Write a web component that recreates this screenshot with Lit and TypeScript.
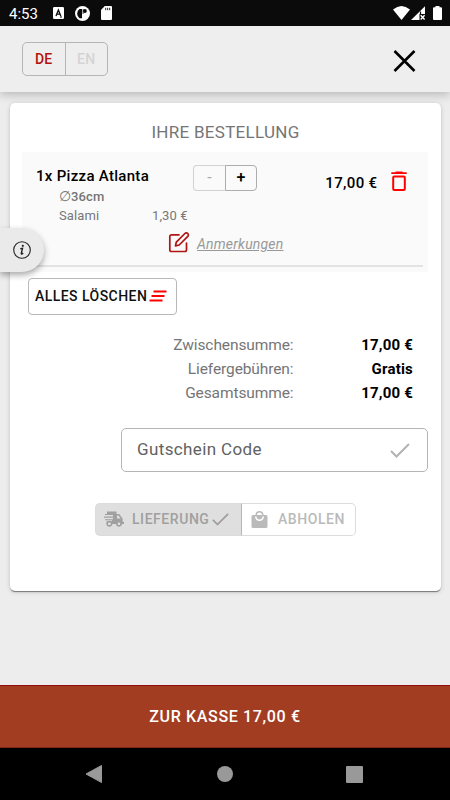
import { LitElement, html, css, svg } from "lit";
import { customElement, property } from "lit/decorators.js";

const totals = [
  ["Zwischensumme:", "17,00 €"],
  ["Liefergebühren:", "Gratis"],
  ["Gesamtsumme:", "17,00 €"],
];

const truck = svg`
  <path fill="currentColor" fill-rule="evenodd" d="M3 .5H12.500V3H15.200L18.600 7.500V10.800L20 11V13H17.900A2.900 2.900 0 0 1 12.200 13H8.300A2.900 2.900 0 0 1 2.600 13V10.300H8V9.300H1V8.200H9V6.700H0V5.600H9V4.100H1V3H3ZM13 4.500V7.500H16.700L14.500 4.500ZM5.400 11.200A1.500 1.500 0 1 0 5.400 14.200A1.500 1.500 0 1 0 5.400 11.200ZM15 11.200A1.500 1.500 0 1 0 15 14.200A1.500 1.500 0 1 0 15 11.200Z"/>
  <path fill="none" stroke="currentColor" stroke-width="1.300" d="M7.700 12.700A2.300 2.300 0 1 1 3.100 12.700A2.300 2.300 0 1 1 7.700 12.700ZM17.300 12.700A2.300 2.300 0 1 1 12.700 12.700A2.300 2.300 0 1 1 17.300 12.700Z"/>`;

@customElement("status-bar")
export class StatusBar extends LitElement {
  static styles = css`
    :host { display: flex; height: 26px; background: #0b0b0b; color: #fff; align-items: center; }
    .time { width: 44px; margin-left: 9px; font: 400 15px/26px Roboto, sans-serif; padding-top: 1px; box-sizing: border-box; height: 26px; }
    svg { display: block; }
    .spacer { flex: 1; }
    .a { margin-right: 11px; }
    .p { margin-right: 11px; }
    .wifi { margin-right: 1px; }
    .signal { margin-right: 7px; }
    .battery { margin-right: 8px; }
  `;
  render() {
    return html`
      <div class="time">4:53</div>
      <svg class="a" width="11" height="12" viewBox="0 0 11 12"><rect width="11" height="12" rx="1.3" fill="#fff"/><path d="M3 9 5.4 3 7.8 9M3.8 7.2H7" fill="none" stroke="#0b0b0b" stroke-width="1.3"/><path d="M7 10h2" stroke="#0b0b0b"/></svg>
      <svg class="p" width="15" height="15" viewBox="0 0 15 15"><circle cx="7.5" cy="7.5" r="7.5" fill="#fff"/><path d="M4.500 3H7V12.300H4.500A5.800 5.800 0 0 1 4.500 3Z" fill="#0b0b0b"/><circle cx="9.900" cy="5" r="1.900" fill="#0b0b0b"/><path d="M8.100 3.200V8" stroke="#0b0b0b" stroke-width=".8"/></svg>
      <svg width="11" height="14" viewBox="0 0 11 14"><path d="M3.8 0H10A1 1 0 0 1 11 1V13A1 1 0 0 1 10 14H1A1 1 0 0 1 0 13V4Z" fill="#fff"/><path d="M4.7 1.8v2.4M6.7 1.8v2.4M8.7 1.8v2.4" stroke="#0b0b0b" stroke-width=".9"/></svg>
      <div class="spacer"></div>
      <svg class="wifi" width="17" height="14" viewBox="0 0 17 14"><path d="M0 3.6Q8.500-3.400 17 3.600L8.500 14Z" fill="#fff"/></svg>
      <svg class="signal" width="15" height="14" viewBox="0 0 15 14"><path d="M0 14 14 .3V8H8.500V14Z" fill="#fff"/><path d="M9.500 5.500V8" stroke="#0b0b0b" stroke-width="1.200"/><path d="M9.700 9.200 13.600 13.500M13.600 9.200 9.700 13.500" stroke="#fff" stroke-width="1.400"/></svg>
      <svg class="battery" width="9" height="14" viewBox="0 0 9 14"><path d="M2.500 0h4v1.200H8a1 1 0 0 1 1 1V13a1 1 0 0 1-1 1H1a1 1 0 0 1-1-1V2.200a1 1 0 0 1 1-1h1.500Z" fill="#fff"/></svg>
    `;
  }
}

@customElement("order-item")
export class OrderItem extends LitElement {
  static styles = css`
    :host { display: block; height: 120px; margin: 0 13px 0 12px; background: #fafafa; box-sizing: border-box; padding: 13px 5px 0 6px; }
    svg { display: block; }
    .top { display: flex; height: 39px; padding-left: 8px; }
    .names { width: 157px; }
    .name { font-weight: 500; font-size: 15px; line-height: 22px; color: #000; letter-spacing: .3px; white-space: nowrap; }
    .size { padding-left: 23px; font-weight: 500; font-size: 13px; line-height: 20px; color: #757575; letter-spacing: .1px; }
    .size span { font-size: 14px; line-height: 1; }
    .qty { display: flex; height: 26px; box-sizing: border-box; }
    .qty div { width: 32px; box-sizing: border-box; border: 1px solid #adadad; text-align: center; font-weight: 500; font-size: 16px; line-height: 23px; color: #000; }
    .qty .minus { border-color: #d2d2d2; border-right: 0; border-radius: 4px 0 0 4px; color: #aaa; font-weight: 400; }
    .qty .plus { border-radius: 0 4px 4px 0; }
    .price { margin-left: auto; font-weight: 500; font-size: 15px; line-height: 36px; color: #000; letter-spacing: .35px; }
    .trash { margin: 6px 16px 0 13.500px; flex: none; }
    .extra { display: flex; padding-left: 31px; font-size: 13px; line-height: 23px; color: #777; height: 28px; letter-spacing: .1px; }
    .extra span:first-child { width: 93px; }
    .note { display: flex; height: 33px; padding-left: 140px; }
    .note span { margin: 4px 0 0 7px; font-size: 14px; line-height: 17px; font-style: italic; color: #999; text-decoration: underline; letter-spacing: .2px; }
    .line { height: 2px; background: #e3e3e3; }
  `;
  render() {
    return html`
      <div class="top">
        <div class="names"><div class="name">1x Pizza Atlanta</div><div class="size"><span>∅</span>36cm</div></div>
        <div class="qty"><div class="minus">-</div><div class="plus">+</div></div>
        <div class="price">17,00 €</div>
        <svg class="trash" width="16" height="20" viewBox="0 0 16 20"><path d="M.3 2.200H15.700M4.500 1.300H11.500" stroke="#f00" stroke-width="1.800" fill="none"/><rect x="2.200" y="5.400" width="11.600" height="13.500" rx="1" fill="none" stroke="#f00" stroke-width="2"/></svg>
      </div>
      <div class="extra"><span>Salami</span><span>1,30 €</span></div>
      <div class="note">
        <svg width="22" height="22" viewBox="0 0 22 22" fill="none" stroke="#b01414" stroke-width="1.700" stroke-linejoin="round" stroke-linecap="round"><path d="M11 2.800H3.500A1.700 1.700 0 0 0 1.800 4.500V17.800A1.700 1.700 0 0 0 3.500 19.500H16.800A1.700 1.700 0 0 0 18.500 17.800V11M7.500 13.800 8.300 10.100 16.900 1.500A2.050 2.050 0 0 1 19.800 4.400L11.200 13Z"/></svg>
        <span>Anmerkungen</span>
      </div>
      <div class="line"></div>
    `;
  }
}

@customElement("check-mark")
export class CheckMark extends LitElement {
  @property({ type: Number }) width = 20;
  static styles = css`:host { display: block; } svg { display: block; }`;
  render() {
    return html`<svg width=${this.width} height=${this.width * 0.75} viewBox="0 0 20 15"><path d="M1 8 6.500 13.500 19 1" fill="none" stroke="currentColor" stroke-width="2"/></svg>`;
  }
}

@customElement("app-root")
export class AppRoot extends LitElement {
  static styles = css`
    :host { display: flex; flex-direction: column; position: relative; width: 450px; height: 800px; overflow: hidden; background: #ededed; font-family: Roboto, "Liberation Sans", sans-serif; }
    svg { display: block; }
    header { display: flex; height: 66px; background: #eee; box-shadow: 0 3px 9px rgba(0,0,0,.22); box-sizing: border-box; padding: 16px 34px 0 22px; justify-content: space-between; flex: none; }
    .lang { display: flex; width: 86px; height: 34px; box-sizing: border-box; border: 1px solid #b5b5b5; border-radius: 5px; font-weight: 500; font-size: 14px; line-height: 32px; letter-spacing: .3px; text-align: center; }
    .lang div { flex: 1; color: #d4d4d4; }
    .lang .on { color: #b3120b; border-right: 1px solid #b5b5b5; }
    .close { margin-top: 8px; }
    main { margin: 11px 9px 0 10px; height: 488px; box-sizing: border-box; background: #fff; border-radius: 5px; box-shadow: 0 2px 1px -1px rgba(0,0,0,.3), 0 1px 1px rgba(0,0,0,.2), 0 1px 5px rgba(0,0,0,.16); flex: none; }
    h1 { margin: 0; height: 49px; padding-top: 18px; box-sizing: border-box; font-weight: 400; font-size: 17px; line-height: 23px; text-align: center; color: #757575; letter-spacing: .28px; }
    .clear { display: flex; align-items: center; margin: 6px 0 0 18px; width: 148.500px; height: 37px; box-sizing: border-box; border: 1px solid #b8b8b8; border-radius: 4px; padding: 0 0 1px 6px; font-size: 14px; font-weight: 500; color: #111; letter-spacing: .45px; white-space: nowrap; }
    .clear svg { margin-left: 2px; flex: none; }
    .totals { display: grid; grid-template-columns: 283.500px 119.500px; grid-auto-rows: 24px; margin-top: 18px; line-height: 24px; font-size: 15.500px; text-align: right; color: #757575; }
    .totals span { letter-spacing: -.1px; }
    .totals b { font-weight: 700; font-size: 15px; color: #000; letter-spacing: .2px; }
    .coupon { display: flex; align-items: center; justify-content: space-between; margin: 23px 13px 0 111px; height: 44px; border: 1px solid #b5b5b5; border-radius: 5px; box-sizing: border-box; padding: 0 17px 0 15px; font-size: 17px; color: #616161; letter-spacing: .38px; }
    .coupon span { padding-bottom: 2px; }
    .coupon check-mark { color: #b3b3b3; }
    .modes { display: flex; margin: 31px 0 0 85px; width: 261px; height: 33px; font-weight: 500; font-size: 14px; line-height: 33px; letter-spacing: .55px; }
    .mode { display: flex; align-items: center; box-sizing: border-box; border: 1px solid #dcdcdc; color: #bababa; white-space: nowrap; }
    .delivery { width: 147px; padding-left: 8px; background: #dfdfdf; color: #a0a0a0; border-right-color: #b5b5b5; border-radius: 5px 0 0 5px; }
    .delivery span { width: 79px; margin: 0 1px 0 8px; }
    .pickup { width: 114px; padding-left: 9px; border-left: 0; border-radius: 0 5px 5px 0; }
    .pickup span { margin-left: 10px; }
    .checkout { margin-top: auto; height: 63px; flex: none; box-sizing: border-box; border-top: 1px solid #8f100b; border-bottom: 1px solid #7f2a18; background: #a33d22; color: #fff; text-align: center; font-weight: 500; font-size: 16px; line-height: 61px; letter-spacing: .65px; }
    nav { display: flex; height: 52px; flex: none; background: #000; align-items: center; padding: 0 87px 0 85px; justify-content: space-between; }
    .circle { margin-left: 2px; }
    .info { position: absolute; left: 0; top: 228px; width: 44px; height: 44px; box-sizing: border-box; padding: 13px; border-radius: 0 22px 22px 0; background: #eaeaea; box-shadow: 0 3px 6px rgba(0,0,0,.34); }
  `;
  render() {
    return html`
      <status-bar></status-bar>
      <header>
        <div class="lang"><div class="on">DE</div><div>EN</div></div>
        <svg class="close" width="23" height="22" viewBox="0 0 23 22"><path d="M1.500 1 21.500 21M21.500 1 1.500 21" stroke="#000" stroke-width="2.600"/></svg>
      </header>
      <main>
        <h1>IHRE BESTELLUNG</h1>
        <order-item></order-item>
        <div class="clear">ALLES LÖSCHEN
          <svg width="18" height="12" viewBox="0 0 18 12"><path d="M4.500 1.500H17.500M2.500 6H15.500M.5 10.500H13.500" stroke="#f00" stroke-width="1.800"/></svg>
        </div>
        <div class="totals">${totals.map(([label, value]) => html`<span>${label}</span><b>${value}</b>`)}</div>
        <div class="coupon"><span>Gutschein Code</span><check-mark .width=${20}></check-mark></div>
        <div class="modes">
          <div class="mode delivery">
            <svg width="20" height="17" viewBox="0 0 20 17">${truck}</svg>
            <span>LIEFERUNG</span><check-mark .width=${17}></check-mark>
          </div>
          <div class="mode pickup">
            <svg width="17" height="18" viewBox="0 0 17 18"><path d="M2 4H4.500A4 4 0 0 1 12.500 4H15A1.500 1.500 0 0 1 16.500 5.500V15.500A1.500 1.500 0 0 1 15 17H2A1.500 1.500 0 0 1 .5 15.500V5.500A1.500 1.500 0 0 1 2 4Z" fill="currentColor"/><path d="M6 4A2.500 2.500 0 0 1 11 4Z" fill="#fff"/><path d="M4.800 5.500A3.700 3.700 0 0 0 12.200 5.500" fill="none" stroke="#fff" stroke-width="1.600"/></svg>
            <span>ABHOLEN</span>
          </div>
        </div>
      </main>
      <div class="checkout">ZUR KASSE 17,00 €</div>
      <nav>
        <svg width="17" height="18" viewBox="0 0 17 18"><path d="M1 9 16.500.5V17.500Z" fill="#999" stroke="#999" stroke-linejoin="round"/></svg>
        <svg class="circle" width="16" height="16" viewBox="0 0 16 16"><circle cx="8" cy="8" r="8" fill="#999"/></svg>
        <svg width="17" height="17" viewBox="0 0 17 17"><rect width="17" height="17" rx="1" fill="#999"/></svg>
      </nav>
      <div class="info">
        <svg width="18" height="18" viewBox="0 0 18 18"><circle cx="9" cy="9" r="8.300" fill="none" stroke="#222" stroke-width="1.100"/><circle cx="9.800" cy="4.800" r="1.100" fill="#222"/><path d="M7.300 7.700 9.500 7.300 8.300 12.300Q8.100 13.500 9.100 12.900L10.200 12.100" fill="none" stroke="#222" stroke-width="1.400"/></svg>
      </div>
    `;
  }
}
